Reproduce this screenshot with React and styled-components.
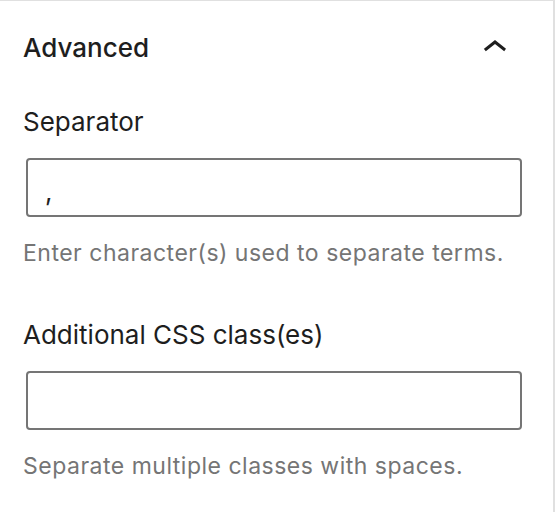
import React from "react";
import styled, { createGlobalStyle } from "styled-components";

const GlobalStyle = createGlobalStyle`
    html, body {
        margin: 0;
        padding: 0;
        background: #ffffff;
    }
    body {
        font-family: Inter, "Noto Sans", "Liberation Sans", sans-serif;
        color: #1e1e1e;
    }
`;

const Panel = styled.section`
    width: 555px;
    height: 512px;
    box-sizing: border-box;
    border-top: 1px solid #e0e0e0;
    border-right: 2px solid #e0e0e0;
    background: #ffffff;
`;

const Header = styled.button`
    display: flex;
    align-items: center;
    justify-content: space-between;
    width: 100%;
    height: 94px;
    padding: 0 34px 0 23px;
    margin: 0;
    border: none;
    background: transparent;
    font-family: inherit;
    cursor: pointer;
`;

const Title = styled.span`
    font-size: 26px;
    font-weight: 500;
    color: #1e1e1e;
    line-height: 32px;
`;

const Body = styled.div`
    display: flex;
    flex-direction: column;
    padding: 11px 0 0 23px;
`;

const Field = styled.div`
    display: flex;
    flex-direction: column;
    margin-bottom: ${(p) => p.$gap || 0}px;
`;

const Label = styled.label`
    font-size: 26px;
    line-height: 32px;
    color: #1e1e1e;
    margin-bottom: 20px;
`;

const Input = styled.input`
    box-sizing: border-box;
    width: 496px;
    height: 59px;
    margin: 0 0 0 3px;
    padding: 8px 16px 0 17px;
    border: 2px solid #757575;
    border-radius: 4px;
    font-family: inherit;
    font-size: 26px;
    color: #1e1e1e;
    background: #ffffff;
    outline: none;
`;

const Help = styled.p`
    margin: 22px 0 0;
    font-size: 23px;
    line-height: 28px;
    letter-spacing: 0.5px;
    color: #757575;
`;

const ChevronUp = () => (
    <svg width="48" height="48" viewBox="0 0 24 24" aria-hidden="true">
        <path
            d="M6.5 12.4L12 8l5.5 4.4-.9 1.2L12 10l-4.6 3.6-1-1.2z"
            fill="#1e1e1e"
        />
    </svg>
);

export default function App() {
    return (
        <>
            <GlobalStyle />
            <Panel>
                <Header aria-expanded="true">
                    <Title>Advanced</Title>
                    <ChevronUp />
                </Header>
                <Body>
                    <Field $gap={52}>
                        <Label htmlFor="separator">Separator</Label>
                        <Input id="separator" defaultValue="," />
                        <Help>Enter character(s) used to separate terms.</Help>
                    </Field>
                    <Field>
                        <Label htmlFor="css-class">Additional CSS class(es)</Label>
                        <Input id="css-class" defaultValue="" />
                        <Help>Separate multiple classes with spaces.</Help>
                    </Field>
                </Body>
            </Panel>
        </>
    );
}
